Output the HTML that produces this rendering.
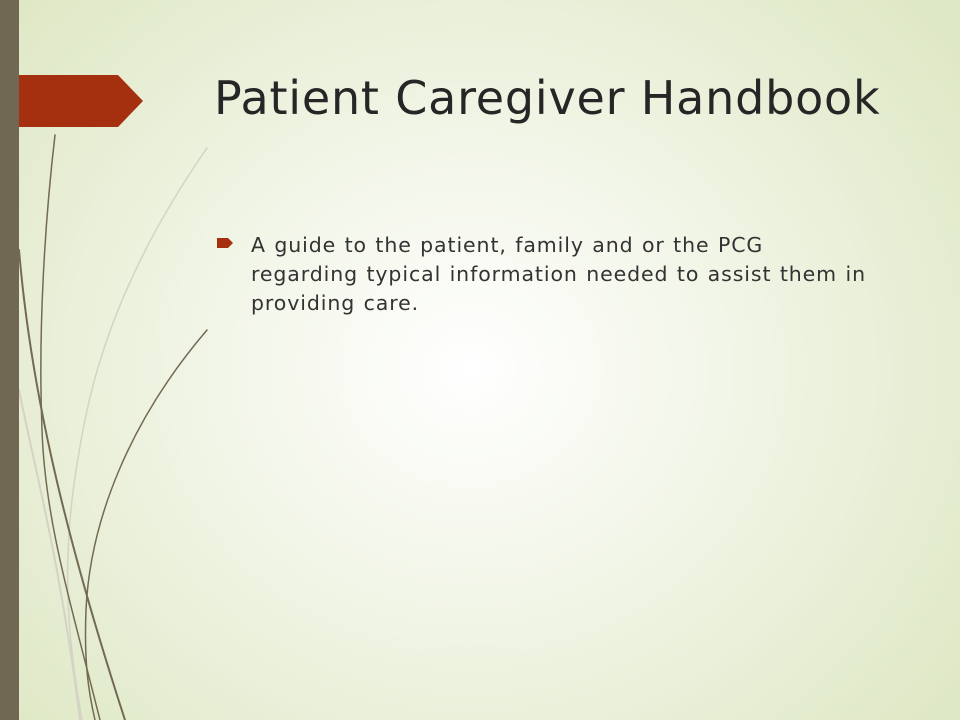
<!DOCTYPE html>
<html><head><style>
body{margin:0;width:960px;height:720px;overflow:hidden;font-family:"DejaVu Sans","Liberation Sans",sans-serif;}
.bg{position:absolute;inset:0;background:radial-gradient(ellipse 600px 540px at 470px 370px,#ffffff 0%,#f1f5e6 45%,#dfe8c6 100%);}
.bar{position:absolute;left:0;top:0;width:19px;height:720px;background:#706852;}
h1{position:absolute;left:214px;top:71px;margin:0;font-weight:normal;font-size:46px;color:#262626;white-space:nowrap;letter-spacing:0.8px;}
.body{position:absolute;left:251px;top:231px;width:700px;font-size:20.5px;line-height:29px;color:#333;white-space:nowrap;letter-spacing:0.9px;word-spacing:1px;}
</style></head><body>
<div class="bg"></div>
<svg width="960" height="720" style="position:absolute;left:0;top:0">
<g fill="none" stroke-linecap="round">
<path d="M207 148 C150 230 105 320 85 420 C65 520 60 600 82 720" stroke="#d4d3c4" stroke-width="1.5"/>
<path d="M19 390 C35 470 60 560 80 720" stroke="#d4d3c4" stroke-width="2"/>
<path d="M55 135 C45 220 38 330 42 430 C45 520 70 600 100 720" stroke="#736a52" stroke-width="1.5"/>
<path d="M19 250 C30 380 60 520 125 720" stroke="#736a52" stroke-width="2"/>
<path d="M207 330 C130 420 90 520 86 610 C84 660 88 690 95 720" stroke="#736a52" stroke-width="1.5"/>
</g>
<polygon points="0,75 118,75 143,101 118,127 0,127" fill="#a5300f"/>
<polygon points="217,238 228,238 233,243 228,248 217,248" fill="#a5300f"/>
</svg>
<div class="bar"></div>
<h1>Patient Caregiver Handbook</h1>
<div class="body">A guide to the patient, family and or the PCG<br>regarding typical information needed to assist them in<br>providing care.</div>
</body></html>
